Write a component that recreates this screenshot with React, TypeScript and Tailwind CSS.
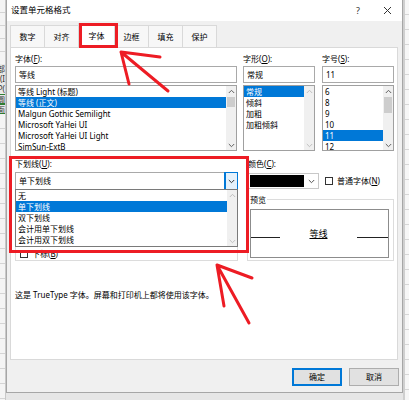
import React from 'react';

const FONT = "font-['Noto_Sans','Noto_Sans_CJK_SC',sans-serif]";

function Chevron({ up = false, color = '#606060' }: { up?: boolean; color?: string }) {
  return (
    <svg width="7" height="5" viewBox="0 0 7 5">
      <path d={up ? 'M0.8 4 L3.5 1.3 L6.2 4' : 'M0.8 1 L3.5 3.7 L6.2 1'} fill="none" stroke={color} strokeWidth="1" />
    </svg>
  );
}

interface ScrollProps {
  thumb?: string; // full class list for the thumb (margin + height)
  disabled?: boolean;
}

function ScrollBar({ thumb, disabled }: ScrollProps) {
  const c = disabled ? '#bfbfbf' : '#606060';
  return (
    <div className="w-[10px] shrink-0 h-full flex flex-col bg-[#f0f0f0]">
      <div className="h-[10px] shrink-0 flex items-center justify-center"><Chevron up color={c} /></div>
      <div className="flex-1 flex flex-col px-px">
        {thumb && <div className={`bg-[#cdcdcd] ${thumb}`} />}
      </div>
      <div className="h-[10px] shrink-0 flex items-center justify-center"><Chevron color={c} /></div>
    </div>
  );
}

interface ListProps {
  items: string[];
  selected: number;
  thumb?: string;
  disabled?: boolean;
}

function ListBox({ items, selected, thumb, disabled }: ListProps) {
  return (
    <div className="mt-[2px] h-[66px] flex border border-[#a0a0a0] bg-white overflow-hidden">
      <div className="flex-1 min-w-0 flex flex-col">
        {items.map((it, i) => (
          <div
            key={i}
            className={`h-[11px] shrink-0 leading-[11px] pl-[2px] whitespace-nowrap ${i === selected ? 'bg-[#0078d7] text-white' : ''}`}
          >
            {it}
          </div>
        ))}
      </div>
      <ScrollBar thumb={thumb} disabled={disabled} />
    </div>
  );
}

function Label({ text, k }: { text: string; k: string }) {
  return (
    <div className="h-[11px] leading-[11px] whitespace-nowrap">
      {text}(<span className="underline">{k}</span>):
    </div>
  );
}

function Input({ value }: { value: string }) {
  return (
    <div className="mt-[2px] h-[17px] border border-[#a9a9a9] bg-white pl-[3px] leading-[15px]">{value}</div>
  );
}

function Check({ text, k }: { text: string; k: string }) {
  return (
    <div className="h-[19px] flex items-center pl-[4px]">
      <div className="w-[8px] h-[8px] border border-[#333] bg-white" />
      <span className="ml-[4px] whitespace-nowrap">
        {text}(<span className="underline">{k}</span>)
      </span>
    </div>
  );
}

function ExcelLeft() {
  const bits = ['部', '(I', 'P(', '圆', '面'];
  return (
    <div className="w-[6px] h-full shrink-0 flex flex-col bg-[#e9e9e9] overflow-hidden border-r border-[#c8c8c8]">
      <div className="h-[64px] shrink-0 bg-[repeating-linear-gradient(to_bottom,#f4f4f4_0px,#f4f4f4_12px,#d4d4d4_12px,#d4d4d4_13px)]" />
      {bits.map((b, i) => (
        <div
          key={i}
          className={`h-[10px] shrink-0 flex justify-end text-[8px] leading-[10px] text-[#333] whitespace-nowrap overflow-hidden ${i > 2 ? 'border-y border-[#2e7d32]' : ''}`}
        >
          {b}
        </div>
      ))}
      <div className="flex-1 bg-[repeating-linear-gradient(to_bottom,#f4f4f4_0px,#f4f4f4_14px,#d4d4d4_14px,#d4d4d4_15px)]" />
    </div>
  );
}

function ExcelRight() {
  return (
    <div className="w-[6px] h-full shrink-0 flex">
      <div className="w-[2px] h-full bg-[#cfcfcf]" />
      <div className="flex-1 h-full bg-[repeating-linear-gradient(to_bottom,#f6f6f6_0px,#f6f6f6_14px,#d6d6d6_14px,#d6d6d6_15px)]" />
    </div>
  );
}

const tabs = ['数字', '对齐', '字体', '边框', '填充', '保护'];

export default function App() {
  return (
    <div className={`relative w-[409px] h-[400px] overflow-hidden bg-[#e6e6e6] flex text-black text-[8px] ${FONT}`}>
      <ExcelLeft />

      <div className="w-[397px] h-[393px] shrink-0 flex flex-col bg-[#f0f0f0] border-x border-b border-[#a6a6a6]">
        {/* title bar */}
        <div className="h-[21px] shrink-0 flex items-center bg-white pl-[4px]">
          <span className="text-[8.5px]">设置单元格格式</span>
          <div className="ml-auto w-[28px] h-full flex items-center justify-center text-[9px] text-[#333]">?</div>
          <div className="w-[30px] h-full flex items-center justify-center">
            <svg width="9" height="9" viewBox="0 0 9 9">
              <path d="M1 1 L8 8 M8 1 L1 8" stroke="#333" strokeWidth="1" />
            </svg>
          </div>
        </div>

        {/* tabs */}
        <div className="h-[26px] shrink-0 flex items-end pl-[3px]">
          {tabs.map((t, i) =>
            i === 2 ? (
              <div
                key={t}
                className="relative z-10 -ml-px w-[37px] h-[25px] mb-[-1px] flex items-center justify-center bg-white border border-b-0 border-[#d9d9d9]"
              >
                {t}
              </div>
            ) : (
              <div
                key={t}
                className={`w-[35px] h-[22px] flex items-center justify-center bg-[#f7f7f7] border border-b-0 border-[#d9d9d9] ${i > 0 ? '-ml-px' : ''}`}
              >
                {t}
              </div>
            )
          )}
        </div>

        {/* tab page */}
        <div className="ml-[3px] w-[388px] h-[313px] shrink-0 bg-white border border-[#d9d9d9] pl-[4px] pt-[5px] flex flex-col">
          <div className="flex">
            <div className="w-[222px]">
              <Label text="字体" k="F" />
              <Input value="等线" />
              <ListBox
                items={['等线 Light (标题)', '等线 (正文)', 'Malgun Gothic Semilight', 'Microsoft YaHei UI', 'Microsoft YaHei UI Light', 'SimSun-ExtB']}
                selected={1}
                thumb="mt-[1px] h-[10px]"
              />
            </div>
            <div className="ml-[6px] w-[72px]">
              <Label text="字形" k="O" />
              <Input value="常规" />
              <ListBox items={['常规', '倾斜', '加粗', '加粗倾斜']} selected={0} disabled />
            </div>
            <div className="ml-[7px] w-[72px]">
              <Label text="字号" k="S" />
              <Input value="11" />
              <ListBox items={['6', '8', '9', '10', '11', '12']} selected={4} thumb="mt-[1px] h-[16px]" />
            </div>
          </div>

          <div className="mt-[7px] h-[103px] flex">
            {/* underline + effects */}
            <div className="w-[223px] flex flex-col">
              <Label text="下划线" k="U" />
              <div className="relative mt-[3px] h-[18px] flex border border-[#a9a9a9] bg-white">
                <div className="flex-1 pl-[3px] leading-[16px]">单下划线</div>
                <div className="w-[12px] h-full flex items-center justify-center bg-[#e5f1fb] border-l border-[#0078d7] outline outline-1 outline-[#0078d7]">
                  <Chevron color="#333" />
                </div>
                <div className="absolute z-20 left-[-1px] right-[-1px] top-[16px] h-[58px] flex border border-[#7a7a7a] bg-white">
                  <div className="flex-1 flex flex-col">
                    {['无', '单下划线', '双下划线', '会计用单下划线', '会计用双下划线'].map((it, i) => (
                      <div key={it} className={`h-[11px] leading-[11px] pl-[2px] ${i === 1 ? 'bg-[#0078d7] text-white' : ''}`}>
                        {it}
                      </div>
                    ))}
                  </div>
                  <ScrollBar disabled />
                </div>
              </div>
              <div className="relative mt-[9px] h-[62px] border border-[#dcdcdc] pt-[6px]">
                <span className="absolute left-[4px] top-[-6px] bg-white px-px leading-[11px]">特殊效果</span>
                <Check text="删除线" k="K" />
                <Check text="上标" k="E" />
                <Check text="下标" k="B" />
              </div>
            </div>

            {/* colour + preview */}
            <div className="ml-[10px] w-[146px] flex flex-col">
              <Label text="颜色" k="C" />
              <div className="mt-[4px] h-[16px] flex items-center">
                <div className="h-[16px] flex items-center border border-[#c8c8c8] bg-white pl-px">
                  <div className="w-[54px] h-[12px] bg-black" />
                  <div className="w-[14px] h-full flex items-center justify-center">
                    <Chevron color="#555" />
                  </div>
                </div>
                <div className="ml-[6px] w-[8px] h-[8px] border border-[#333] bg-white" />
                <span className="ml-[4px] whitespace-nowrap">
                  普通字体(<span className="underline">N</span>)
                </span>
              </div>
              <div className="relative mt-[10px] -ml-px h-[62px] border border-[#dcdcdc]">
                <span className="absolute left-[1px] top-[-6px] bg-white px-px leading-[11px]">预览</span>
                <div className="ml-[2px] mt-[9px] w-[139px] h-[49px] flex items-center justify-between border border-[#8c8c8c]">
                  <div className="w-[29px] h-px bg-[#222] mt-[8px]" />
                  <span className="text-[9px] underline">等线</span>
                  <div className="w-[31px] h-px bg-[#222] mt-[8px]" />
                </div>
              </div>
            </div>
          </div>

          <div className="mt-[28px] h-[11px] leading-[11px] whitespace-nowrap">
            这是 TrueType 字体。屏幕和打印机上都将使用该字体。
          </div>
        </div>

        {/* buttons */}
        <div className="mt-[8px] flex justify-end pr-[3px] gap-[7px]">
          <div className="w-[50px] h-[18px] flex items-center justify-center bg-[#e1e1e1] border-2 border-[#0078d7]">确定</div>
          <div className="w-[50px] h-[18px] flex items-center justify-center bg-[#e1e1e1] border border-[#adadad]">取消</div>
        </div>
      </div>

      <ExcelRight />

      {/* annotations drawn over the dialog */}
      <div className="absolute left-[79px] top-[23px] w-[39px] h-[25px] border-[3px] border-[#ed1c24] z-30" />
      <div className="absolute left-[9px] top-[156px] w-[240px] h-[97px] border-[3px] border-[#ed1c24] z-30" />
      <svg className="absolute inset-0 z-30 pointer-events-none" width="409" height="400" viewBox="0 0 409 400">
        <g stroke="#ed1c24" strokeWidth="3" strokeLinecap="round" fill="none">
          <path d="M121 52 L168 91 M121 52 L160 57 M121 52 L129 84" />
          <path d="M217 265 L249 323 M217 265 L252 278 M217 265 L224 306" />
        </g>
      </svg>
    </div>
  );
}
